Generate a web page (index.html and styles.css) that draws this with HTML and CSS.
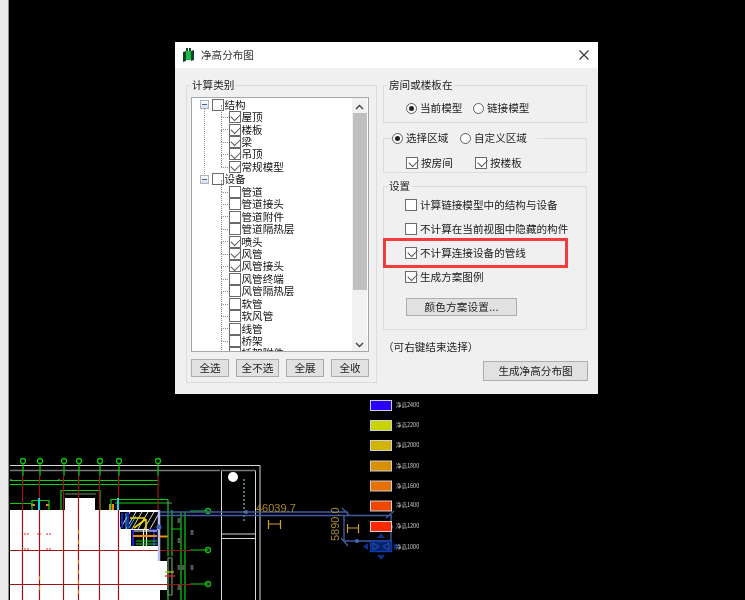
FILE: index.html
```html
<!DOCTYPE html>
<html lang="zh-CN">
<head>
<meta charset="utf-8">
<title>净高分布图</title>
<link rel="stylesheet" href="styles.css">
</head>
<body>
<div class="desktop">
  <div class="edge"></div>
  <svg class="cad" width="745" height="600" viewBox="0 0 745 600">
    <path class="grey2" d="M10 470.5H220"/>
    <path class="white1" d="M10 465.5H260V600M221.5 470V600M221 534H255M221 538.5H255M255.5 470V600"/>
    <path class="grey2" d="M221 470.5H256M10 480H12M58 480H60"/>
    <path class="fillwhite" d="M10 510H65V498H95V510H158V561H167V590H160V600H10Z"/>
    <path class="fillblack" d="M120 512H158V529H120ZM131 530H158V546H131Z"/>
    <path class="hatch" d="M120 529L130 512M126 529L136 512M132 529L142 512M138 529L148 512M144 529L154 512M150 529L158 515"/>
    <path class="blueline2" d="M122 513V528M128 512V529M133 530V546M149 530H157M154 530V546"/>
    <path class="cyan1" d="M126 513V529M129 528L136 516"/>
    <path class="yellow2" d="M130 518H145M146 519V529M134 528L146 519"/>
    <path class="whitebar" d="M143.500 530V546M146.500 530V546M134 531H157"/>
    <path class="orange2" d="M133 536H157M160 536.500H168M31 505H35M46 505H49M110 504V510M113 504V510"/>
    <path class="green1" d="M23 464V476M40 464V476M64 464V476M79 464V476M100 464V476M119 464V476M158 464V476M10 480.5H158M10 484.5H158M10 503.5H31M32 510V500.500H49V510M61 510V490.500H100V510M111 510V499.500H168M168 500V556M172 510V556M115 503H165M181 512V600M185 512V600M190 511H208M190 550H208M190 584H208M172 529H181M168 590V600M136 541H157M136 544H157"/>
    <path class="dullgreen" d="M65 494H96M168 558H172V595H168ZM165 503H172"/>
    <path class="grass" d="M165 572H174"/>
    <path class="redbar" d="M165 576H175"/>
    <g class="bubble">
      <circle cx="23" cy="461" r="2.5"/><circle cx="40" cy="461" r="2.5"/><circle cx="64" cy="461" r="2.5"/><circle cx="79" cy="461" r="2.5"/><circle cx="100" cy="461" r="2.5"/><circle cx="119" cy="461" r="2.5"/><circle cx="158" cy="461" r="2.5"/>
      <circle cx="208" cy="511" r="2.5"/><circle cx="208" cy="550" r="2.5"/><circle cx="208" cy="584" r="2.5"/>
    </g>
    <path class="greybits" d="M179 518V523M179 538V543M179 565V570M179 585V590M183 565V570M192 530V535M192 565V570"/>
    <path class="red1" d="M22.5 476V600M39.5 476V600M63.5 476V600M78.5 476V600M99.5 476V600M118.5 476V600M158 476V510M10 550.5H192M10 584.5H192"/>
    <path class="cyan2" d="M39 498V510M118 498V510"/>
    <path class="specks" d="M24 534H29M46 534H51M24 549H29M46 549H51M37 534H41"/>
    <path class="specky" d="M79 530V548M78 560V600M39 576V590"/>
    <path class="lav" d="M159 510V561"/>
    <path class="blue1" d="M160 512H348M160 515.500H392M344 515V541H391V515M342 508L349 515M341 538L348 546M386 518L394 511"/>
    <circle class="bluedot" cx="246" cy="512" r="2"/><circle class="bluedot" cx="357" cy="541" r="2"/><circle class="bluedot" cx="391" cy="527" r="2"/><circle class="bluedot" cx="159" cy="527" r="2.500"/>
    <circle class="fillwhite" cx="233" cy="477" r="5"/>
    <path class="dots" d="M244 479V523"/>
    <path class="orange1" d="M268.500 520V529M280.500 520V529M269 524H280M347.500 524V533M358.500 524V533M348 528H358"/>
    <text class="dim" x="256" y="512">46039.7</text>
    <text class="dim" transform="translate(339 541) rotate(-90)" x="0" y="0">5890.0</text>
    <rect class="swatch s1" x="370.500" y="400.500" width="21" height="10"/>
    <rect class="swatch s2" x="370.500" y="420.500" width="21" height="10"/>
    <rect class="swatch s3" x="370.500" y="440.500" width="21" height="10"/>
    <rect class="swatch s4" x="370.500" y="461" width="21" height="10"/>
    <rect class="swatch s5" x="370.500" y="481" width="21" height="10"/>
    <rect class="swatch s6" x="370.500" y="501" width="21" height="10"/>
    <rect class="swatch s7" x="370.500" y="521.500" width="21" height="10"/>
    <rect class="marker" x="370.500" y="541.500" width="21" height="10"/>
    <path class="markerfill" d="M381 533L377 538H385ZM381 560L377 555H385ZM363 546.500L368 543V550ZM399 546.500L394 543V550Z"/>
    <path class="markerline" d="M373 543L379 546.500L373 550ZM389 543L383 546.500L389 550Z"/>
    <g class="legend-labels">
      <text x="396" y="407">净高2400</text><text x="396" y="427">净高2200</text><text x="396" y="447">净高2000</text><text x="396" y="468">净高1800</text><text x="396" y="488">净高1600</text><text x="396" y="507">净高1400</text><text x="396" y="528">净高1200</text><text x="396" y="549">净高1000</text>
    </g>
  </svg>

  <div class="dialog">
    <div class="titlebar">
      <svg class="appicon" width="11" height="14" viewBox="0 0 11 14"><path class="ic-dark" d="M0 4L3 3V13L0 14ZM8 3L11 2V12L8 13Z"/><path class="ic-green" d="M3 3L8 3V12H3Z"/><path class="ic-dark" d="M3 0H5V3H3ZM6 0H8V3H6Z"/></svg>
      <span class="title">净高分布图</span>
      <svg class="close" width="10" height="10" viewBox="0 0 10 10"><path d="M0.500 0.500L9.500 9.500M9.500 0.500L0.500 9.500"/></svg>
    </div>
    <div class="content">
      <fieldset class="group left">
        <legend>计算类别</legend>
        <div class="listbox">
          <div class="tree">
            <div class="row root first"><span class="exp"></span><span class="cb"></span><span>结构</span></div>
            <div class="row child"><span class="cb on"></span><span>屋顶</span></div>
            <div class="row child"><span class="cb on"></span><span>楼板</span></div>
            <div class="row child"><span class="cb on"></span><span>梁</span></div>
            <div class="row child"><span class="cb on"></span><span>吊顶</span></div>
            <div class="row child"><span class="cb on"></span><span>常规模型</span></div>
            <div class="row root"><span class="exp"></span><span class="cb"></span><span>设备</span></div>
            <div class="row child"><span class="cb"></span><span>管道</span></div>
            <div class="row child"><span class="cb"></span><span>管道接头</span></div>
            <div class="row child"><span class="cb"></span><span>管道附件</span></div>
            <div class="row child"><span class="cb"></span><span>管道隔热层</span></div>
            <div class="row child"><span class="cb on"></span><span>喷头</span></div>
            <div class="row child"><span class="cb on"></span><span>风管</span></div>
            <div class="row child"><span class="cb on"></span><span>风管接头</span></div>
            <div class="row child"><span class="cb"></span><span>风管终端</span></div>
            <div class="row child"><span class="cb"></span><span>风管隔热层</span></div>
            <div class="row child"><span class="cb"></span><span>软管</span></div>
            <div class="row child"><span class="cb"></span><span>软风管</span></div>
            <div class="row child"><span class="cb"></span><span>线管</span></div>
            <div class="row child"><span class="cb"></span><span>桥架</span></div>
            <div class="row child"><span class="cb"></span><span>桥架附件</span></div>
          </div>
          <div class="scrollbar">
            <svg class="arrow" width="9" height="6" viewBox="0 0 9 6"><path d="M1 5L4.500 1.500L8 5"/></svg>
            <div class="thumb"></div>
            <svg class="arrow" width="9" height="6" viewBox="0 0 9 6"><path d="M1 1L4.500 4.500L8 1"/></svg>
          </div>
        </div>
        <div class="btnrow">
          <button class="btn b38">全选</button>
          <button class="btn b43">全不选</button>
          <button class="btn b38">全展</button>
          <button class="btn b38">全收</button>
        </div>
      </fieldset>

      <div class="rightcol">
        <fieldset class="group g1">
          <legend>房间或楼板在</legend>
          <div class="line pad-radio">
            <label class="opt w67"><span class="rb on"></span>当前模型</label>
            <label class="opt"><span class="rb"></span>链接模型</label>
          </div>
        </fieldset>
        <fieldset class="group g2">
          <legend class="radiolegend">
            <label class="opt w68"><span class="rb on"></span>选择区域</label>
            <label class="opt"><span class="rb"></span>自定义区域</label>
          </legend>
          <div class="line pad-check">
            <label class="opt w69"><span class="cb on"></span>按房间</label>
            <label class="opt"><span class="cb on"></span>按楼板</label>
          </div>
        </fieldset>
        <fieldset class="group g3">
          <legend>设置</legend>
          <div class="settings">
            <label class="opt"><span class="cb"></span>计算链接模型中的结构与设备</label>
            <label class="opt"><span class="cb"></span>不计算在当前视图中隐藏的构件</label>
            <label class="opt"><span class="cb on"></span>不计算连接设备的管线</label>
            <label class="opt"><span class="cb on"></span>生成方案图例</label>
          </div>
          <button class="btn colorbtn">颜色方案设置...</button>
        </fieldset>
        <div class="note">（可右键结束选择）</div>
        <button class="btn genbtn">生成净高分布图</button>
      </div>
    </div>
    <div class="highlight"></div>
  </div>
</div>
</body>
</html>
```

FILE: styles.css
```css
* { box-sizing: border-box; }
html, body { margin: 0; padding: 0; background: #000; }
body { width: 745px; height: 600px; overflow: hidden; font-family: "Noto Sans CJK SC", "Liberation Sans", sans-serif; }
.desktop { position: relative; width: 745px; height: 600px; background: #000; overflow: hidden; }
.edge { position: absolute; left: 0; top: 0; width: 9px; height: 600px; background: #ececec; border-right: 1.5px solid #8f8f8f; }
.cad { position: absolute; left: 0; top: 0; filter: blur(0.4px); }
.cad path, .cad rect { fill: none; }
.white1 { stroke: #d8d8d8; stroke-width: 1; }
.grey2 { stroke: #777; stroke-width: 1.6; }
.cad .fillwhite { fill: #fff; }
.cad .fillblack { fill: #050505; }
.hatch { stroke: #ddd; stroke-width: 1; }
.blueline2 { stroke: #1a20e0; stroke-width: 2; }
.cyan1 { stroke: #20d0e0; stroke-width: 1; }
.yellow2 { stroke: #eedd00; stroke-width: 1.6; }
.whitebar { stroke: #f4f4f4; stroke-width: 1.2; }
.orange2 { stroke: #ef8a10; stroke-width: 2; }
.green1 { stroke: #0fcf0f; stroke-width: 1.2; }
.dullgreen { stroke: #6a9a6a; stroke-width: 1.2; }
.grass { stroke: #a0c020; stroke-width: 1.4; }
.redbar { stroke: #e82020; stroke-width: 1.4; }
.greybits { stroke: #555; stroke-width: 3; }
.bubble circle { fill: none; stroke: #10c010; stroke-width: 1.3; }
.red1 { stroke: #9c1414; stroke-width: 1.2; }
.cyan2 { stroke: #10d8e8; stroke-width: 2; }
.specks { stroke: #f07070; stroke-width: 1.5; stroke-dasharray: 2 1; }
.specky { stroke: #f0e870; stroke-width: 1; stroke-dasharray: 4 6; }
.lav { stroke: #b9bdf0; stroke-width: 2.5; }
.blue1 { stroke: #3f5c9e; stroke-width: 1.4; }
.bluedot { fill: #3f6cb8; }
.dots { stroke: #56707a; stroke-width: 2; stroke-dasharray: 2 2; }
.orange1 { stroke: #d8a020; stroke-width: 1.2; }
.dim { fill: #a78a2e; font-family: "Liberation Sans", sans-serif; font-size: 11px; }
.swatch { stroke: #cfcfcf; stroke-width: 1; }
.cad .s1 { fill: #2a00ff; }
.cad .s2 { fill: #c8d400; }
.cad .s3 { fill: #d2b400; }
.cad .s4 { fill: #d89000; }
.cad .s5 { fill: #e87000; }
.cad .s6 { fill: #f04800; }
.cad .s7 { fill: #ff2800; }
.cad .marker { fill: #06226a; stroke: #0a3cb0; stroke-width: 1.4; }
.cad .markerfill { fill: #0a2f8a; }
.markerline { stroke: #2a55b8; stroke-width: 1; }
.legend-labels text { fill: #c8c8c8; font-size: 5.5px; font-family: "Noto Sans CJK SC", sans-serif; }

.dialog { position: absolute; left: 175px; top: 42px; width: 423px; height: 352px; background: #f0f0f0; display: flex; flex-direction: column; color: #1a1a1a; font-size: 10.6px; line-height: 14px; filter: blur(0.3px); }
.titlebar { height: 26px; background: #fff; display: flex; align-items: center; padding: 0 9px 0 8px; flex: none; }
.appicon { flex: none; margin-right: 7px; }
.ic-dark { fill: #16402a; }
.ic-green { fill: #12c048; }
.title { flex: 1; color: #333; }
.close path { fill: none; stroke: #333; stroke-width: 1.1; }
.content { display: flex; gap: 6px; padding: 9px 10px 0 11px; align-items: flex-start; }
.group { margin: 0; min-width: 0; border: 1px solid #dcdcdc; }
.group legend { padding: 0 1px; height: 16px; line-height: 16px; margin-left: 4px; color: #222; }
.left { width: 191px; height: 306px; padding: 4px 4px 0; }
.group.left legend { margin-left: 0; }
.listbox { height: 255px; width: 178px; background: #fff; border: 1.5px solid #a3a8ad; display: flex; overflow: hidden; }
.tree { flex: 1; padding: 0.500px 0 0 7.500px; overflow: hidden; min-width: 0; line-height: 12px; }
.row { height: 12.45px; display: flex; align-items: center; white-space: nowrap; position: relative; color: #111; }
.child { padding-left: 29px; }
.child::before { content: ""; position: absolute; left: 21.500px; top: 6px; width: 7px; border-top: 1px dotted #8a8a8a; }
.child::after { content: ""; position: absolute; left: 21px; top: -6px; height: 12.5px; border-left: 1px dotted #8a8a8a; }
.first::after { content: ""; position: absolute; left: 4px; top: 9px; height: 66px; border-left: 1px dotted #999; }
.exp { width: 9px; height: 9px; border: 1px solid #a8b4c4; background: linear-gradient(#fff, #d8dee8); margin-right: 3.500px; position: relative; flex: none; }
.exp::after { content: ""; position: absolute; left: 1px; right: 1px; top: 3px; border-top: 1.300px solid #4a5f90; }
.row .cb { margin-right: 1px; }
.root .cb { margin-right: 0.500px; }
.cb { width: 12px; height: 12px; border: 1px solid #6a6a6a; background: #fff; display: inline-block; position: relative; flex: none; }
.cb.on::after { content: ""; position: absolute; left: 1.500px; top: 1.200px; width: 8px; height: 4.500px; border-left: 1px solid #555; border-bottom: 1px solid #555; transform: rotate(-45deg); }
.scrollbar { width: 15px; margin-right: 1px; background: #f1f1f1; display: flex; flex-direction: column; align-items: center; flex: none; padding: 6px 0 3px; }
.arrow { flex: none; }
.arrow path { fill: none; stroke: #444; stroke-width: 1.4; }
.thumb { width: 14px; height: 177px; background: #bfbfbf; margin: 3px 0 auto; }
.btnrow { display: flex; gap: 7px; margin-top: 7px; }
.btn { font: inherit; line-height: 14px; color: #222; background: #e1e1e1; border: 1px solid #adadad; border-radius: 0; height: 18px; padding: 0; }
.b38 { width: 38px; }
.b43 { width: 43px; }
.rightcol { width: 204px; display: flex; flex-direction: column; }
.g1 { height: 46px; padding: 0; }
.g2 { height: 43px; margin-top: 7px; padding: 0; }
.g3 { height: 152px; margin-top: 5px; padding: 0; }
.group .radiolegend { margin-left: 8px; padding: 0 10px 0 0; display: flex; height: 16px; }
.opt { display: flex; align-items: center; white-space: nowrap; gap: 3px; }
.line { display: flex; }
.pad-radio { padding: 8px 0 0 22px; }
.pad-check { padding: 10px 0 0 22px; }
.w67 { width: 67px; }
.w68 { width: 68px; }
.w69 { width: 69px; }
.rb { width: 11px; height: 11px; border: 1px solid #5e5e5e; border-radius: 50%; background: #fff; position: relative; flex: none; }
.rb.on::after { content: ""; position: absolute; left: 2px; top: 2px; width: 5px; height: 5px; border-radius: 50%; background: #222; }
.settings { display: flex; flex-direction: column; padding: 4px 0 0 21px; gap: 10px; }
.colorbtn { display: block; width: 111px; height: 18px; margin: 14px 0 0 22px; letter-spacing: 0.2px; }
.note { height: 16px; line-height: 16px; margin-top: 9px; padding-left: 0; color: #222; }
.genbtn { width: 105px; height: 20px; margin: 6px -1px 0 auto; }
.highlight { position: absolute; left: 208px; top: 196px; width: 185px; height: 30px; border: 3px solid #f23c3c; }
```
